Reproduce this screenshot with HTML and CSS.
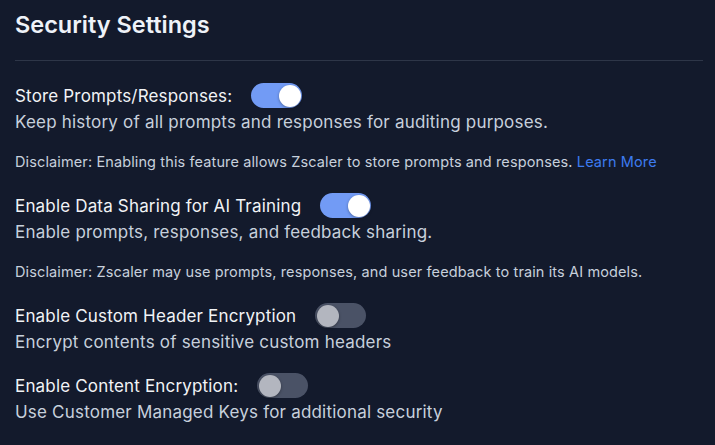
FILE: index.html
```html
<!DOCTYPE html>
<html lang="en">
<head>
<meta charset="utf-8">
<title>Security Settings</title>
<link rel="stylesheet" href="styles.css">
</head>
<body>
<main class="panel">
  <h1 class="panel-title">Security Settings</h1>
  <hr class="divider">

  <section class="setting">
    <div class="setting-row">
      <span class="setting-label">Store Prompts/Responses:</span>
      <span class="toggle is-on" role="switch" aria-checked="true"><span class="knob"></span></span>
    </div>
    <p class="setting-desc">Keep history of all prompts and responses for auditing purposes.</p>
    <p class="disclaimer">Disclaimer: Enabling this feature allows Zscaler to store prompts and responses. <a class="link" href="#">Learn More</a></p>
  </section>

  <section class="setting">
    <div class="setting-row">
      <span class="setting-label">Enable Data Sharing for AI Training</span>
      <span class="toggle is-on" role="switch" aria-checked="true"><span class="knob"></span></span>
    </div>
    <p class="setting-desc">Enable prompts, responses, and feedback sharing.</p>
    <p class="disclaimer">Disclaimer: Zscaler may use prompts, responses, and user feedback to train its AI models.</p>
  </section>

  <section class="setting">
    <div class="setting-row">
      <span class="setting-label">Enable Custom Header Encryption</span>
      <span class="toggle" role="switch" aria-checked="false"><span class="knob"></span></span>
    </div>
    <p class="setting-desc">Encrypt contents of sensitive custom headers</p>
  </section>

  <section class="setting">
    <div class="setting-row">
      <span class="setting-label">Enable Content Encryption:</span>
      <span class="toggle" role="switch" aria-checked="false"><span class="knob"></span></span>
    </div>
    <p class="setting-desc">Use Customer Managed Keys for additional security</p>
  </section>
</main>
</body>
</html>
```
FILE: styles.css
```css
html, body {
  margin: 0;
  padding: 0;
  background: #131a2c;
}

body {
  font-family: Inter, "Noto Sans", sans-serif;
  color: #f1f3f6;
  width: 715px;
  height: 445px;
  overflow: hidden;
}

.panel {
  padding: 9px 12px 0 15px;
}

.panel-title {
  margin: 0;
  font-size: 23.5px;
  line-height: 32px;
  font-weight: 600;
  color: #eef2f8;
}

.divider {
  border: 0;
  border-top: 1px solid #2e3648;
  margin: 19px 0 4px 0;
}

.setting {
  display: flex;
  flex-direction: column;
  padding-top: 17px;
}

.setting-row {
  display: flex;
  align-items: center;
  gap: 19px;
  height: 27px;
}

.setting-label {
  font-size: 17px;
  letter-spacing: 0.17px;
  line-height: 26px;
  color: #f1f3f6;
}

.setting-desc {
  margin: 0;
  font-size: 17px;
  letter-spacing: 0.2px;
  line-height: 26px;
  color: #c7d0dc;
}

.disclaimer {
  margin: 14px 0 0 0;
  font-size: 14.5px;
  letter-spacing: 0.12px;
  line-height: 26px;
  color: #c7d0dc;
}

.link {
  color: #3d7bf0;
  text-decoration: none;
}

.toggle {
  position: relative;
  display: inline-block;
  width: 51px;
  height: 25px;
  border-radius: 13px;
  background: #4a5266;
  flex: none;
}

.toggle .knob {
  position: absolute;
  top: 1.5px;
  left: 1.5px;
  width: 22px;
  height: 22px;
  border-radius: 50%;
  background: #b3b6bf;
  box-shadow: 0 1px 3px rgba(0, 0, 0, 0.35);
}

.toggle.is-on {
  background: #729bf5;
}

.toggle.is-on .knob {
  left: 27.5px;
  background: #ffffff;
}
```
